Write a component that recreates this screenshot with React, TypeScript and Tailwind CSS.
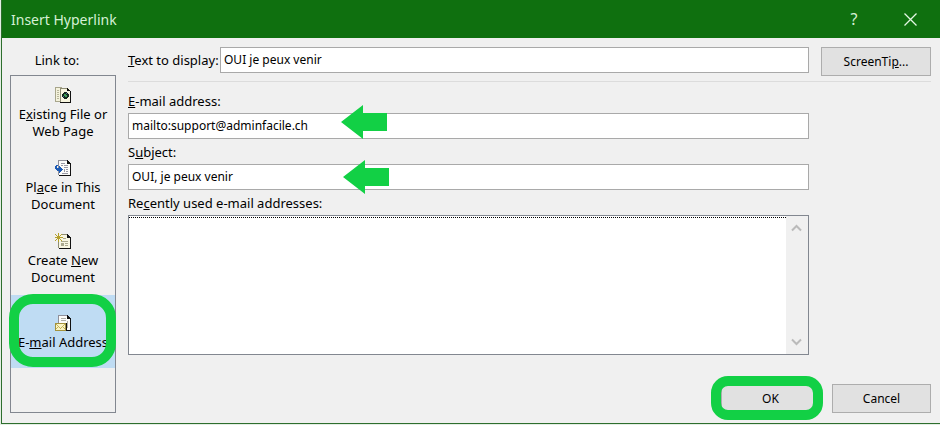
import React, { useState } from "react";

type Target = "file" | "place" | "new" | "email";

function FileIcon() {
  return (
    <svg width="16" height="16" viewBox="0 0 16 16" shapeRendering="crispEdges">
      <path d="M0 0h7v15H0z" fill="#f4f2dc" />
      <path d="M0 0h7v1H0zM0 1h1v14H0zM1 14h4v1H1z" fill="#a8a68c" />
      <path d="M2 3h2v1H2zM2 5h2v1H2zM2 7h2v1H2zM2 9h2v1H2zM2 11h2v1H2z" fill="#b9b79c" />
      <path d="M5 1h8l2 2v12H5z" fill="#f7f5df" />
      <path d="M5 1h8v1H5zM5 2h1v13H5z" fill="#8f8d74" />
      <path d="M12 1h1v1h1v1h1v1h1v12H5v-1h10V4h-3z" fill="#111" />
      <path d="M9 5h3v1h1v1h1v3h-1v1h-1v1H9v-1H8v-1H7V7h1V6h1z" fill="#13281c" />
      <path d="M9 7h2v1h1v2h-2V9H9z" fill="#3f9a55" />
      <path d="M11 6h1v1h-1zM8 9h1v1H8z" fill="#4a6f9a" />
    </svg>
  );
}

function Page() {
  return (
    <>
      <path d="M4 0h8l3 3v12H4z" fill="#fcfcfa" />
      <path d="M3 0h9v1H3zM3 1h1v14H3z" fill="#90909a" />
      <path d="M12 0h1v1h1v1h1v1h1v13H4v-1h11V4h-3z" fill="#111" />
    </>
  );
}

function PlaceIcon() {
  return (
    <svg width="16" height="16" viewBox="0 0 16 16" shapeRendering="crispEdges">
      <Page />
      <path d="M6 3h4v1H6zM6 5h2v1H6zM9 5h4v1H9zM9 7h4v1H9zM9 9h1v3H9zM11 9h2v1h-2zM11 11h2v1h-2zM7 13h6v1H7z" fill="#9a9aa6" />
      <path d="M1 5h2v1H2v2h2V6h1v1h1v1h1v1h1v1H7v1H6v1H5v1H4v-2H2v-1H1V9H0V6h1z" fill="#1d5bb5" />
    </svg>
  );
}

function NewIcon() {
  return (
    <svg width="16" height="16" viewBox="0 0 16 16" shapeRendering="crispEdges">
      <path d="M5 1h7l3 3v11H4V5z" fill="#f8f6e2" />
      <path d="M6 1h6v1H6zM3 8h1v7H3z" fill="#8f8d74" />
      <path d="M12 1h1v1h1v1h1v1h1v12H4v-1h11V5h-3z" fill="#111" />
      <path d="M8 5h3v1H8zM6 8h7v1H6zM6 10h3v3H6zM10 10h3v1h-3zM10 12h3v1h-3z" fill="#aaa88e" />
      <path d="M3 0h1v3h1V2h1V1h1v1H6v1H5v1h3v1H5v1h1v1h1v1H6V7H5V6H4v3H3V6H2v1H1v1H0V7h1V6h1V5H0V4h2V3H1V2H0V1h1v1h1v1h1z" fill="#b5a02c" />
    </svg>
  );
}

function MailIcon() {
  return (
    <svg width="16" height="16" viewBox="0 0 16 16" shapeRendering="crispEdges">
      <Page />
      <path d="M6 3h5v1H6zM6 5h5v1H6zM12 6h1v7h-1z" fill="#b0b0a6" />
      <path d="M0 8h11v8H0z" fill="#a3923d" />
      <path d="M1 9h9v6H1z" fill="#fbf5c4" />
      <path d="M1 9h1v1h1v1h1v1h1v1h1v-1h1v-1h1v-1h1V9h1v1H9v1H8v1h1v1h1v1H9v-1H8v-1H7v1H6v1H5v-1H4v-1H3v1H2v1H1v-1h1v-1h1v-1H2v-1H1z" fill="#c5b45a" />
      <path d="M11 8h1v8h-1z" fill="#111" />
    </svg>
  );
}

function Arrow() {
  return (
    <svg width="46" height="34" viewBox="0 0 46 34">
      <path d="M0 17 22 0v8h24v18H22v8z" fill="#12d045" />
    </svg>
  );
}

const items: { id: Target; icon: React.ReactNode; label: React.ReactNode }[] = [
  { id: "file", icon: <FileIcon />, label: <>E<u>x</u>isting File or<br />Web Page</> },
  { id: "place", icon: <PlaceIcon />, label: <>Pl<u>a</u>ce in This<br />Document</> },
  { id: "new", icon: <NewIcon />, label: <>Create <u>N</u>ew<br />Document</> },
  { id: "email", icon: <MailIcon />, label: <>E-<u>m</u>ail Address</> },
];

const inputClass = "w-full h-[26px] bg-white border border-[#a9a9a9] px-[3px] pb-px text-[12px] outline-none";
const buttonClass = "h-[29px] bg-[#e1e1e1] border border-[#adadad] text-center text-[12px]";

export default function App() {
  const [target, setTarget] = useState<Target>("email");
  const [display, setDisplay] = useState("OUI je peux venir");
  const [email, setEmail] = useState("mailto:support@adminfacile.ch");
  const [subject, setSubject] = useState("OUI, je peux venir");

  return (
    <div className="bg-[#e4eee4] pl-px pb-px font-['Noto_Sans',sans-serif] text-[13px] leading-[17px] text-black">
      <div className="bg-[#f0f0f0] border-l border-b border-[#2d6e2d]">
        <header className="h-[38px] bg-[#0f700f] text-[#d5f0d5] flex items-center pl-[9px] pr-[14px]">
          <h1 className="flex-1 text-[14px]">Insert Hyperlink</h1>
          <button className="w-8 h-8 text-[16px]" aria-label="Help">?</button>
          <button className="w-8 h-8 ml-6 flex items-center justify-center" aria-label="Close">
            <svg width="13" height="13" viewBox="0 0 13 13" fill="none" stroke="#e4f7e4" strokeWidth="1.3">
              <path d="M.5.5l12 12M12.5.5l-12 12" />
            </svg>
          </button>
        </header>

        <div className="flex gap-3 pl-2 pr-[9px] pt-[9px] pb-[10px]">
          <nav className="w-[106px] shrink-0 flex flex-col" aria-label="Link to">
            <div className="h-7 pt-[5px] pr-3 text-center">Link to:</div>
            <div className="flex-1 border border-[#828790]">
              {items.map((item) => (
                <button
                  key={item.id}
                  onClick={() => setTarget(item.id)}
                  className={`relative w-full h-[73px] pt-[2px] flex flex-col items-center justify-center gap-[3px] whitespace-nowrap ${target === item.id ? "bg-[#bfdcf3]" : ""}`}
                >
                  {item.icon}
                  <span>{item.label}</span>
                  {item.id === "email" && (
                    <span className="absolute -left-[2px] -right-px -top-px bottom-px border-10 border-[#12d045] rounded-[24px] pointer-events-none" />
                  )}
                </button>
              ))}
            </div>
          </nav>

          <main className="flex-1 min-w-0 flex flex-col">
            <div className="flex items-start gap-3 h-[35px] border-b border-[#dcdcdc]">
              <div className="flex-1 flex items-center">
                <label htmlFor="display" className="w-[92px] shrink-0 whitespace-nowrap"><u>T</u>ext to display:</label>
                <input id="display" className={inputClass} value={display} onChange={(e) => setDisplay(e.target.value)} />
              </div>
              <button className={`w-[110px] ${buttonClass}`}>ScreenTi<u>p</u>...</button>
            </div>

            <div className="mr-[122px] pt-[6px]">
              <label htmlFor="email" className="h-[25px] pt-px flex items-center"><u>E</u>-mail address:</label>
              <div className="relative">
                <input id="email" className={inputClass} value={email} onChange={(e) => setEmail(e.target.value)} />
                <span className="absolute left-[213px] -top-2"><Arrow /></span>
              </div>
              <label htmlFor="subject" className="h-[25px] pt-px flex items-center"><span>S<u>u</u>bject:</span></label>
              <div className="relative">
                <input id="subject" className={inputClass} value={subject} onChange={(e) => setSubject(e.target.value)} />
                <span className="absolute left-[215px] -top-1"><Arrow /></span>
              </div>
              <div id="recent" className="h-[25px] pt-px flex items-center"><span>Re<u>c</u>ently used e-mail addresses:</span></div>
              <div role="listbox" aria-labelledby="recent" className="h-[140px] bg-white border border-[#828790] flex">
                <div className="flex-1 mt-px border-t border-dotted border-black" />
                <div className="w-[22px] bg-[#f0f0f0] flex flex-col items-center justify-between py-2 pr-[2px]">
                  <svg width="11" height="8" viewBox="0 0 11 8" fill="none" stroke="#bababa" strokeWidth="2">
                    <path d="M1 6.5 5.5 2 10 6.5" />
                  </svg>
                  <svg width="11" height="8" viewBox="0 0 11 8" fill="none" stroke="#bababa" strokeWidth="2">
                    <path d="M1 1.5 5.5 6 10 1.5" />
                  </svg>
                </div>
              </div>
            </div>

            <div className="flex justify-end gap-3 pt-[29px]">
              <div className="relative">
                <button className={`w-[99px] ${buttonClass}`}>OK</button>
                <span className="absolute -left-[10px] -right-[3px] -top-2 -bottom-[7px] border-10 border-[#12d045] rounded-[17px] pointer-events-none" />
              </div>
              <button className={`w-[99px] ${buttonClass}`}>Cancel</button>
            </div>
          </main>
        </div>
      </div>
    </div>
  );
}
